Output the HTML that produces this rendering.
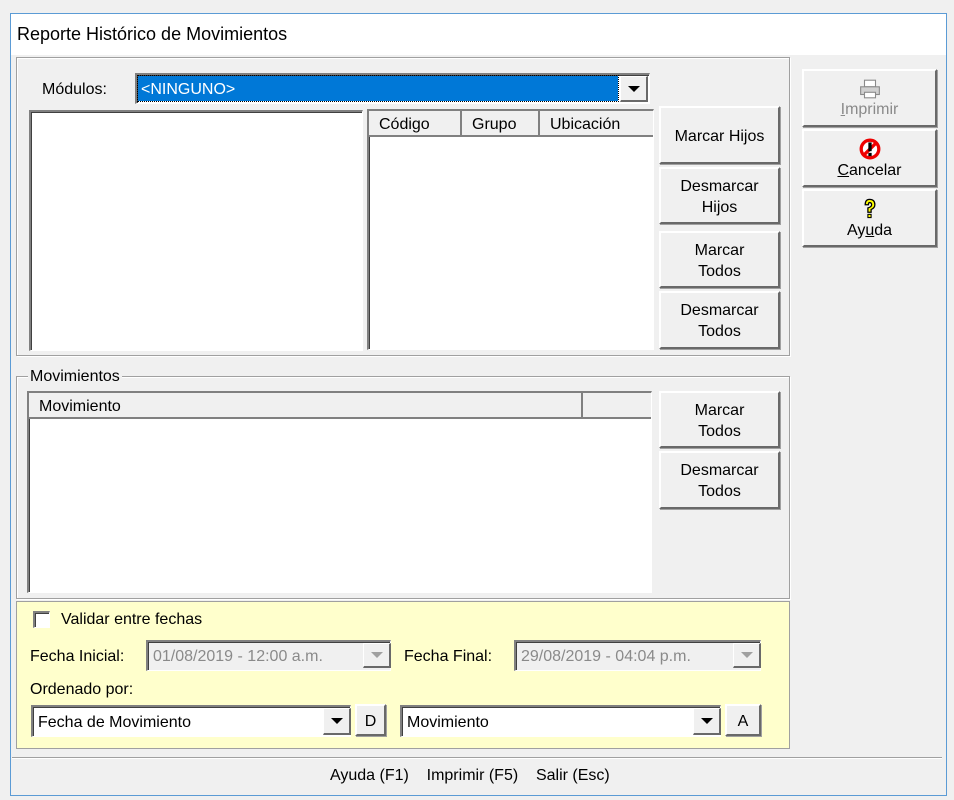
<!DOCTYPE html>
<html><head><meta charset="utf-8"><style>
*{box-sizing:border-box;margin:0;padding:0}
body{width:954px;height:800px;background:#f0f0f0;position:relative;overflow:hidden;font-family:"Liberation Sans",sans-serif;font-size:16px;color:#000}
.a{position:absolute}
.win{left:10px;top:13px;width:937px;height:783px;border:1px solid #5b9bd5;background:#f0f0f0}
.btn{position:absolute;background:#f0f0f0;border-top:2px solid #fff;border-left:2px solid #fff;border-right:2px solid #696969;border-bottom:2px solid #696969;box-shadow:1px 1px 0 #a0a0a0;display:flex;flex-direction:column;align-items:center;justify-content:center;text-align:center;line-height:21px;font-size:16px;padding-top:2px}
.sunk{position:absolute;background:#fff;border-top:2px solid #808080;border-left:2px solid #808080;border-right:1px solid #fff;border-bottom:1px solid #fff;box-shadow:inset 1px 1px 0 #404040}
.frame{position:absolute;border:1px solid #a0a0a0;box-shadow:1px 1px 0 #fff inset,1px 1px 0 #fff}
.hdr{position:absolute;top:0;height:26px;background:#f0f0f0;border-right:2px solid #808080;border-bottom:2px solid #808080;padding-left:10px;line-height:28px}
.dd{position:absolute;width:28px;background:#f0f0f0;border-top:1px solid #fff;border-left:1px solid #fff;border-right:2px solid #696969;border-bottom:2px solid #696969}
.dd:after{content:"";position:absolute;left:50%;top:50%;margin:-3px 0 0 -6px;border-left:6px solid transparent;border-right:6px solid transparent;border-top:6px solid #000}
.dd.g:after{border-top-color:#a0a0a0}
</style></head><body>
<div class="a win"></div>
<div class="a" style="left:11px;top:14px;width:935px;height:41px;background:#fff"></div>
<div class="a" style="left:17px;top:24px;font-size:18px">Reporte Histórico de Movimientos</div>

<div class="frame" style="left:16px;top:57px;width:774px;height:299px"></div>
<div class="a" style="left:42px;top:81px">Módulos:</div>
<div class="sunk" style="left:135px;top:73px;width:515px;height:31px"></div>
<div class="a" style="left:138px;top:76px;width:480px;height:25px;background:#0078d7;color:#fff;outline:1px dotted #000;padding-left:3px;line-height:27px">&lt;NINGUNO&gt;</div>
<div class="dd" style="left:620px;top:76px;height:26px"></div>

<div class="sunk" style="left:29px;top:110px;width:334px;height:241px"></div>
<div class="sunk" style="left:367px;top:109px;width:287px;height:241px;overflow:hidden">
<div class="hdr" style="left:0;width:93px">Código</div>
<div class="hdr" style="left:93px;width:78px">Grupo</div>
<div class="hdr" style="left:171px;width:115px">Ubicación</div>
</div>
<div class="btn" style="left:659px;top:106px;width:121px;height:58px">Marcar Hijos</div>
<div class="btn" style="left:659px;top:167px;width:121px;height:57px">Desmarcar<br>Hijos</div>
<div class="btn" style="left:659px;top:231px;width:121px;height:57px">Marcar<br>Todos</div>
<div class="btn" style="left:659px;top:291px;width:121px;height:58px">Desmarcar<br>Todos</div>

<div class="btn" style="left:802px;top:69px;width:135px;height:58px;color:#8a8a8a">
<svg width="22" height="20" viewBox="0 0 20 18"><rect x="5" y="1" width="10" height="6" fill="#fff" stroke="#8a8a8a"/><rect x="1.5" y="7" width="17" height="7" fill="#d0d0d0" stroke="#8a8a8a"/><rect x="5" y="12" width="10" height="5" fill="#fff" stroke="#8a8a8a"/></svg>
<span><u>I</u>mprimir</span></div>
<div class="btn" style="left:802px;top:129px;width:135px;height:58px">
<svg width="22" height="22" viewBox="0 0 20 20"><circle cx="10" cy="10" r="8" fill="#fff" stroke="#e00" stroke-width="3"/><line x1="4" y1="16" x2="16" y2="4" stroke="#e00" stroke-width="3"/><rect x="8.5" y="4" width="3" height="8" fill="#000"/><rect x="8.5" y="13.5" width="3" height="3" fill="#000"/></svg>
<span><u>C</u>ancelar</span></div>
<div class="btn" style="left:802px;top:189px;width:135px;height:58px">
<svg width="15" height="22" viewBox="0 0 14 20"><path d="M3 6 Q3 1 7 1 Q12 1 12 6 Q12 9 8.5 10.5 L8.5 13 L5.5 13 L5.5 9 Q9 8 9 6 Q9 4 7 4 Q6 4 6 6 Z" fill="#ff0" stroke="#000" stroke-width="1.2"/><rect x="5.5" y="15" width="3" height="3" fill="#ff0" stroke="#000"/></svg>
<span>Ay<u>u</u>da</span></div>

<div class="frame" style="left:16px;top:376px;width:774px;height:223px"></div>
<div class="a" style="left:28px;top:368px;background:#f0f0f0;padding:0 2px">Movimientos</div>
<div class="sunk" style="left:27px;top:391px;width:625px;height:202px;overflow:hidden">
<div class="hdr" style="left:0;width:554px">Movimiento</div>
<div class="hdr" style="left:554px;width:70px;border-right:none"></div>
</div>
<div class="btn" style="left:659px;top:391px;width:121px;height:57px">Marcar<br>Todos</div>
<div class="btn" style="left:659px;top:451px;width:121px;height:58px">Desmarcar<br>Todos</div>

<div class="a" style="left:16px;top:601px;width:774px;height:148px;background:#ffffcc;border:1px solid #a0a0a0"></div>
<div class="sunk" style="left:33px;top:611px;width:17px;height:17px"></div>
<div class="a" style="left:61px;top:611px">Validar entre fechas</div>
<div class="a" style="left:30px;top:648px">Fecha Inicial:</div>
<div class="sunk" style="left:146px;top:640px;width:245px;height:31px;background:#f0f0f0;color:#8a8a8a;padding:6px 0 0 5px">01/08/2019 - 12:00 a.m.</div>
<div class="dd g" style="left:363px;top:643px;height:25px"></div>
<div class="a" style="left:404px;top:648px">Fecha Final:</div>
<div class="sunk" style="left:514px;top:640px;width:247px;height:31px;background:#f0f0f0;color:#8a8a8a;padding:6px 0 0 5px">29/08/2019 - 04:04 p.m.</div>
<div class="dd g" style="left:733px;top:643px;height:25px"></div>
<div class="a" style="left:30px;top:681px">Ordenado por:</div>
<div class="sunk" style="left:31px;top:705px;width:320px;height:32px;padding:7px 0 0 5px">Fecha de Movimiento</div>
<div class="dd" style="left:323px;top:708px;height:27px"></div>
<div class="btn" style="left:355px;top:704px;width:31px;height:32px">D</div>
<div class="sunk" style="left:400px;top:705px;width:321px;height:32px;padding:7px 0 0 5px">Movimiento</div>
<div class="dd" style="left:693px;top:708px;height:27px"></div>
<div class="btn" style="left:725px;top:704px;width:36px;height:32px">A</div>

<div class="a" style="left:12px;top:757px;width:930px;height:1px;background:#a0a0a0"></div>
<div class="a" style="left:12px;top:758px;width:930px;height:1px;background:#fff"></div>
<div class="a" style="left:330px;top:767px;white-space:pre">Ayuda (F1)    Imprimir (F5)    Salir (Esc)</div>
</body></html>
